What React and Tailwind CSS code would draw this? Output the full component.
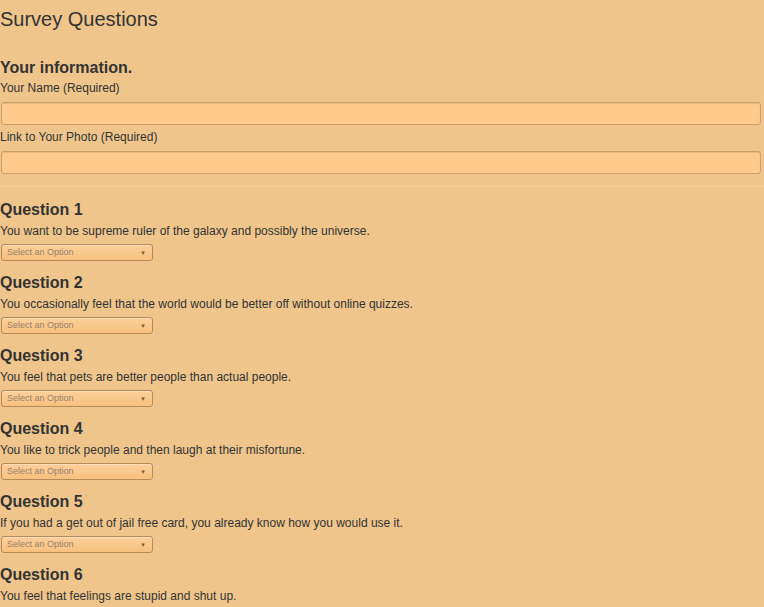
import React from "react";

const questions = [
  "You want to be supreme ruler of the galaxy and possibly the universe.",
  "You occasionally feel that the world would be better off without online quizzes.",
  "You feel that pets are better people than actual people.",
  "You like to trick people and then laugh at their misfortune.",
  "If you had a get out of jail free card, you already know how you would use it.",
  "You feel that feelings are stupid and shut up.",
];

function Select() {
  return (
    <div className="mt-[5px] w-[152px] h-[17px] ml-[1px] rounded-[3px] border border-[#b48c5c] bg-gradient-to-b from-[#fcd09a] to-[#f7c07e] flex items-center justify-between pl-[5px] pr-[6px] shadow-[inset_0_1px_0_rgba(255,255,255,0.3)]">
      <span className="text-[9px] leading-none text-[#98826a]">Select an Option</span>
      <span className="text-[6px] leading-none text-[#7a5e3c]">▼</span>
    </div>
  );
}

export default function App() {
  return (
    <div className="bg-[#efc58b] text-[#333] font-['Liberation_Sans',Arial,sans-serif] overflow-hidden h-[607px]">
      <h1 className="pt-[8px] text-[20px] leading-[22px] font-normal">Survey Questions</h1>
      <h2 className="mt-[28px] text-[16px] leading-[20px] font-bold">Your information.</h2>
      <div className="mt-[3px] text-[12px] leading-[15px]">Your Name (Required)</div>
      <div className="mt-[6px] ml-[1px] mr-[3px] h-[23px] rounded-[3px] border border-[#c9a070] bg-[#ffca8c] shadow-[inset_0_1px_1px_rgba(0,0,0,0.08)]"></div>
      <div className="mt-[5px] text-[12px] leading-[15px]">Link to Your Photo (Required)</div>
      <div className="mt-[6px] ml-[1px] mr-[3px] h-[23px] rounded-[3px] border border-[#c9a070] bg-[#ffca8c] shadow-[inset_0_1px_1px_rgba(0,0,0,0.08)]"></div>
      <div className="mt-[12px] h-px bg-[#f3cf9d]"></div>
      {questions.map((q, i) => (
        <div key={i} className={i === 0 ? "mt-[13px]" : "mt-[12px]"}>
          <h3 className="text-[16px] leading-[20px] font-bold">Question {i + 1}</h3>
          <div className="mt-[4px] text-[12px] leading-[15px]">{q}</div>
          {i < questions.length - 1 && <Select />}
        </div>
      ))}
    </div>
  );
}
